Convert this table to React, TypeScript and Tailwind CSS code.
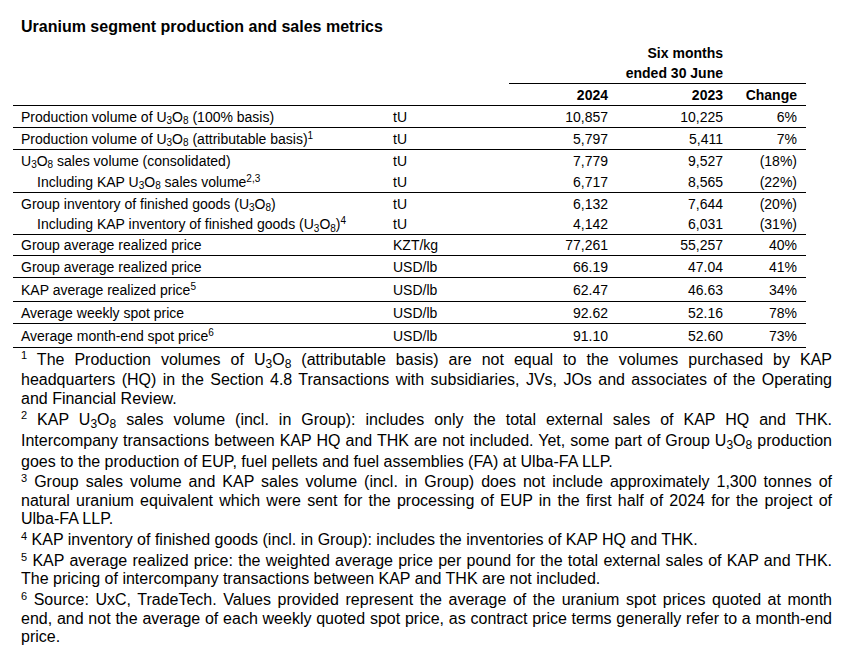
import React from 'react';

const cols = 'grid grid-cols-[372px_124px_106px_116px_75px] items-center';

const Sub = ({ children, big = false }: { children: React.ReactNode; big?: boolean }) => (
  <sub className={big ? 'text-[12px]' : 'text-[10px]'}>{children}</sub>
);

const Sup = ({ children, big = false }: { children: React.ReactNode; big?: boolean }) => (
  <sup className={big ? 'text-[11px]' : 'text-[10px]'}>{children}</sup>
);

const U3O8 = ({ big = false }: { big?: boolean }) => (
  <>
    U<Sub big={big}>3</Sub>O<Sub big={big}>8</Sub>
  </>
);

type Row = {
  label: React.ReactNode;
  unit: string;
  a: string;
  b: string;
  c: string;
  h: string;
  line?: boolean;
  indent?: boolean;
};

const rows: Row[] = [
  { label: <>Production volume of <U3O8 /> (100% basis)</>, unit: 'tU', a: '10,857', b: '10,225', c: '6%', h: 'h-[22px]', line: true },
  { label: <>Production volume of <U3O8 /> (attributable basis)<Sup>1</Sup></>, unit: 'tU', a: '5,797', b: '5,411', c: '7%', h: 'h-[22px]', line: true },
  { label: <><U3O8 /> sales volume (consolidated)</>, unit: 'tU', a: '7,779', b: '9,527', c: '(18%)', h: 'h-[21px]' },
  { label: <>Including KAP <U3O8 /> sales volume<Sup>2,3</Sup></>, unit: 'tU', a: '6,717', b: '8,565', c: '(22%)', h: 'h-[22px]', line: true, indent: true },
  { label: <>Group inventory of finished goods (<U3O8 />)</>, unit: 'tU', a: '6,132', b: '7,644', c: '(20%)', h: 'h-[21px]' },
  { label: <>Including KAP inventory of finished goods (<U3O8 />)<Sup>4</Sup></>, unit: 'tU', a: '4,142', b: '6,031', c: '(31%)', h: 'h-[21px]', line: true, indent: true },
  { label: 'Group average realized price', unit: 'KZT/kg', a: '77,261', b: '55,257', c: '40%', h: 'h-[21px]', line: true },
  { label: 'Group average realized price', unit: 'USD/lb', a: '66.19', b: '47.04', c: '41%', h: 'h-[22px]', line: true },
  { label: <>KAP average realized price<Sup>5</Sup></>, unit: 'USD/lb', a: '62.47', b: '46.63', c: '34%', h: 'h-[24px]', line: true },
  { label: 'Average weekly spot price', unit: 'USD/lb', a: '92.62', b: '52.16', c: '78%', h: 'h-[22px]', line: true },
  { label: <>Average month-end spot price<Sup>6</Sup></>, unit: 'USD/lb', a: '91.10', b: '52.60', c: '73%', h: 'h-[24px]', line: true },
];

// one footnote line; every line but the last of a note is stretched edge to edge
const Line = ({
  children,
  last = false,
  up = false,
  down = false,
}: {
  children: React.ReactNode;
  last?: boolean;
  up?: boolean;
  down?: boolean;
}) => (
  <div
    className={`${last ? 'text-left' : 'text-justify [text-align-last:justify]'} ${up ? 'pt-[2.5px]' : ''} ${down ? 'pb-[2.5px]' : ''}`}
  >
    {children}
  </div>
);

export default function App() {
  return (
    <div className="w-[852px] h-[650px] bg-white text-black font-['Liberation_Sans',Arial,sans-serif] overflow-hidden">
      <div className="pl-[21px] pt-[18px] text-[16px] font-bold leading-[18px]">
        Uranium segment production and sales metrics
      </div>

      <div className="ml-[13px] w-[793px] mt-[7px] text-[14px] leading-[16px]">
        <div className="font-bold">
          <div className="h-[20px] flex items-center justify-end pr-[83px]">Six months</div>
          <div className="ml-[496px] h-[21px] flex items-center justify-end pr-[83px] border-b border-black">
            ended 30 June
          </div>
          <div className={`${cols} h-[22px] border-b border-black`}>
            <div />
            <div />
            <div className="text-right pr-[7px]">2024</div>
            <div className="text-right pr-2">2023</div>
            <div className="text-right pr-[9px]">Change</div>
          </div>
        </div>

        {rows.map((r, i) => (
          <div key={i} className={`${cols} ${r.h} ${r.line ? 'border-b border-black' : ''}`}>
            <div className={r.indent ? 'pl-6' : 'pl-2'}>{r.label}</div>
            <div className="pl-2">{r.unit}</div>
            <div className="text-right pr-[7px]">{r.a}</div>
            <div className="text-right pr-2">{r.b}</div>
            <div className="text-right pr-[9px]">{r.c}</div>
          </div>
        ))}
      </div>

      <div className="ml-[21px] w-[811px] text-[16px] leading-[18.4px]">
        <Line up down>
          <Sup big>1</Sup> The Production volumes of <U3O8 big /> (attributable basis) are not equal to the volumes purchased by KAP
        </Line>
        <Line>
          headquarters (HQ) in the Section 4.8 Transactions with subsidiaries, JVs, JOs and associates of the Operating
        </Line>
        <Line last>and Financial Review.</Line>

        <Line up down>
          <Sup big>2</Sup> KAP <U3O8 big /> sales volume (incl. in Group): includes only the total external sales of KAP HQ and THK.
        </Line>
        <Line down>
          Intercompany transactions between KAP HQ and THK are not included. Yet, some part of Group <U3O8 big /> production
        </Line>
        <Line last>goes to the production of EUP, fuel pellets and fuel assemblies (FA) at Ulba-FA LLP.</Line>

        <Line up>
          <Sup big>3</Sup> Group sales volume and KAP sales volume (incl. in Group) does not include approximately 1,300 tonnes of
        </Line>
        <Line>
          natural uranium equivalent which were sent for the processing of EUP in the first half of 2024 for the project of
        </Line>
        <Line last>Ulba-FA LLP.</Line>

        <Line up last>
          <Sup big>4</Sup> KAP inventory of finished goods (incl. in Group): includes the inventories of KAP HQ and THK.
        </Line>

        <Line up>
          <Sup big>5</Sup> KAP average realized price: the weighted average price per pound for the total external sales of KAP and THK.
        </Line>
        <Line last>The pricing of intercompany transactions between KAP and THK are not included.</Line>

        <Line up>
          <Sup big>6</Sup> Source: UxC, TradeTech. Values provided represent the average of the uranium spot prices quoted at month
        </Line>
        <Line>
          end, and not the average of each weekly quoted spot price, as contract price terms generally refer to a month-end
        </Line>
        <Line last>price.</Line>
      </div>
    </div>
  );
}
